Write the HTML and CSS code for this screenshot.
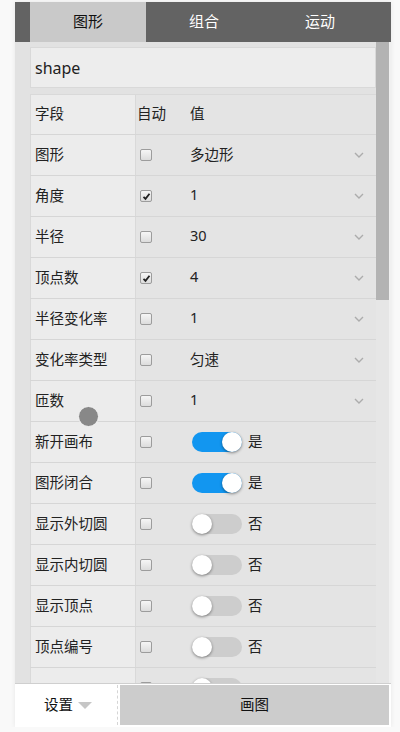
FILE: index.html
```html
<!DOCTYPE html>
<html>
<head>
<meta charset="utf-8">
<link rel="stylesheet" href="styles.css">
</head>
<body>
<div class="app">
  <div class="tabs">
    <div class="tab active">图形</div>
    <div class="tab">组合</div>
    <div class="tab">运动</div>
  </div>
  <div class="main">
    <div class="content">
      <div class="name-input">shape</div>
      <div class="table">
        <div class="row head"><div class="c1">字段</div><div class="c2"><span class="t">自动</span></div><div class="c3"><span class="val">值</span></div></div>
        <div class="row"><div class="c1">图形</div><div class="c2"><span class="cb"></span></div><div class="c3"><span class="val">多边形</span><svg class="chev" width="10" height="6" viewBox="0 0 10 6"><path d="M1 1l4 4 4-4" fill="none" stroke="#acacac" stroke-width="1.4"/></svg></div></div>
        <div class="row"><div class="c1">角度</div><div class="c2"><span class="cb on"><svg width="9" height="9" viewBox="0 0 9 9"><path d="M1.5 4.8l2 2 4-5" fill="none" stroke="#222" stroke-width="1.8"/></svg></span></div><div class="c3"><span class="val">1</span><svg class="chev" width="10" height="6" viewBox="0 0 10 6"><path d="M1 1l4 4 4-4" fill="none" stroke="#acacac" stroke-width="1.4"/></svg></div></div>
        <div class="row"><div class="c1">半径</div><div class="c2"><span class="cb"></span></div><div class="c3"><span class="val">30</span><svg class="chev" width="10" height="6" viewBox="0 0 10 6"><path d="M1 1l4 4 4-4" fill="none" stroke="#acacac" stroke-width="1.4"/></svg></div></div>
        <div class="row"><div class="c1">顶点数</div><div class="c2"><span class="cb on"><svg width="9" height="9" viewBox="0 0 9 9"><path d="M1.5 4.8l2 2 4-5" fill="none" stroke="#222" stroke-width="1.8"/></svg></span></div><div class="c3"><span class="val">4</span><svg class="chev" width="10" height="6" viewBox="0 0 10 6"><path d="M1 1l4 4 4-4" fill="none" stroke="#acacac" stroke-width="1.4"/></svg></div></div>
        <div class="row"><div class="c1">半径变化率</div><div class="c2"><span class="cb"></span></div><div class="c3"><span class="val">1</span><svg class="chev" width="10" height="6" viewBox="0 0 10 6"><path d="M1 1l4 4 4-4" fill="none" stroke="#acacac" stroke-width="1.4"/></svg></div></div>
        <div class="row"><div class="c1">变化率类型</div><div class="c2"><span class="cb"></span></div><div class="c3"><span class="val">匀速</span><svg class="chev" width="10" height="6" viewBox="0 0 10 6"><path d="M1 1l4 4 4-4" fill="none" stroke="#acacac" stroke-width="1.4"/></svg></div></div>
        <div class="row"><div class="c1">匝数</div><div class="c2"><span class="cb"></span></div><div class="c3"><span class="val">1</span><svg class="chev" width="10" height="6" viewBox="0 0 10 6"><path d="M1 1l4 4 4-4" fill="none" stroke="#acacac" stroke-width="1.4"/></svg></div></div>
        <div class="row"><div class="c1">新开画布</div><div class="c2"><span class="cb"></span></div><div class="c3"><span class="sw on"><span class="knob"></span></span><span class="swl">是</span></div></div>
        <div class="row"><div class="c1">图形闭合</div><div class="c2"><span class="cb"></span></div><div class="c3"><span class="sw on"><span class="knob"></span></span><span class="swl">是</span></div></div>
        <div class="row"><div class="c1">显示外切圆</div><div class="c2"><span class="cb"></span></div><div class="c3"><span class="sw"><span class="knob"></span></span><span class="swl">否</span></div></div>
        <div class="row"><div class="c1">显示内切圆</div><div class="c2"><span class="cb"></span></div><div class="c3"><span class="sw"><span class="knob"></span></span><span class="swl">否</span></div></div>
        <div class="row"><div class="c1">显示顶点</div><div class="c2"><span class="cb"></span></div><div class="c3"><span class="sw"><span class="knob"></span></span><span class="swl">否</span></div></div>
        <div class="row"><div class="c1">顶点编号</div><div class="c2"><span class="cb"></span></div><div class="c3"><span class="sw"><span class="knob"></span></span><span class="swl">否</span></div></div>
        <div class="row"><div class="c1"></div><div class="c2"><span class="cb"></span></div><div class="c3"><span class="sw"><span class="knob"></span></span></div></div>
      </div>
    </div>
    <div class="scrollbar"><div class="thumb"></div></div>
  </div>
  <div class="footer">
    <div class="settings">设置<span class="tri"></span></div>
    <div class="draw">画图</div>
  </div>
  <div class="dot"></div>
</div>
</body>
</html>
```

FILE: styles.css
```css
* { box-sizing: border-box; }
body {
  margin: 0;
  background: #f9f9f9;
  font-family: "Noto Sans", "Noto Sans CJK SC", sans-serif;
  color: #222;
}
.app {
  position: relative;
  margin: 2px 0 0 15px;
  width: 376px;
  height: 725px;
  display: flex;
  flex-direction: column;
  background: #e2e2e2;
  box-shadow: 0 0 5px rgba(0, 0, 0, 0.08);
}
.tabs {
  flex: none;
  height: 40px;
  background: #636363;
  display: flex;
  padding-left: 15px;
}
.tab {
  width: 116px;
  display: flex;
  align-items: center;
  justify-content: center;
  color: #fff;
  font-size: 15px;
  padding-bottom: 4px;
}
.tab.active {
  background: #c9c9c9;
  color: #111;
}
.main {
  flex: 1;
  min-height: 0;
  display: flex;
}
.content {
  flex: 1;
  overflow: hidden;
  padding: 5px 0 0 15px;
}
.scrollbar {
  flex: none;
  width: 15px;
  background: #e6e6e6;
  border-right: 2px solid #f0f0f0;
}
.thumb {
  height: 258px;
  background: #b3b3b3;
}
.name-input {
  height: 41px;
  border: 1px solid #d9d9d9;
  background: #ededed;
  font-size: 16px;
  padding-left: 4px;
  display: flex;
  align-items: center;
  color: #222;
}
.table {
  margin-top: 6px;
  border-top: 1px solid #d9d9d9;
}
.row {
  display: flex;
  height: 41px;
  border-bottom: 1px solid #d6d6d6;
  font-size: 14.5px;
}
.row.head { height: 40px; }
.c1 {
  width: 106px;
  flex: none;
  background: #ececec;
  border-left: 1px solid #d9d9d9;
  border-right: 1px solid #d9d9d9;
  padding: 0 0 4px 4px;
  display: flex;
  align-items: center;
}
.c2 {
  width: 49px;
  flex: none;
  background: #e4e4e4;
  padding-left: 4px;
  display: flex;
  align-items: center;
}
.head .c2 { padding-left: 1px; }
.t, .val, .swl { padding-bottom: 4px; }
.c3 {
  flex: 1;
  background: #e4e4e4;
  padding: 0 12px 0 5px;
  display: flex;
  align-items: center;
}
.val { flex: 1; }
.chev { flex: none; }
.cb {
  width: 12px;
  height: 12px;
  border: 1px solid #9c9c9c;
  border-radius: 2px;
  background: linear-gradient(#f6f6f6, #dcdcdc);
  display: flex;
  align-items: center;
  justify-content: center;
}
.sw {
  margin-left: 2px;
  width: 50px;
  height: 20px;
  border-radius: 10px;
  background: #cdcdcd;
  display: flex;
  align-items: center;
}
.sw.on {
  background: #1296f0;
  justify-content: flex-end;
}
.knob {
  width: 20px;
  height: 20px;
  border-radius: 50%;
  background: #fff;
  box-shadow: 0 1px 3px rgba(0, 0, 0, 0.45);
}
.swl { margin-left: 6px; }
.footer {
  flex: none;
  height: 44px;
  border-top: 1px solid #cfcfcf;
  background: #fff;
  display: flex;
  padding: 1px 2px 2px 0;
}
.settings {
  width: 103px;
  border-right: 1px dashed #d5d5d5;
  display: flex;
  align-items: center;
  justify-content: center;
  font-size: 14.5px;
  color: #111;
  padding: 0 0 3px 4px;
}
.tri {
  margin: 3px 0 0 5px;
  width: 0;
  height: 0;
  border-left: 7px solid transparent;
  border-right: 7px solid transparent;
  border-top: 7px solid #c6c6c6;
}
.draw {
  flex: 1;
  margin-left: 2px;
  background: #cccccc;
  display: flex;
  align-items: center;
  justify-content: center;
  font-size: 14.5px;
  color: #111;
  padding-bottom: 3px;
}
.dot {
  position: absolute;
  left: 63px;
  top: 404px;
  width: 21px;
  height: 21px;
  border-radius: 50%;
  background: #888;
  border: 1px solid #f4f4f4;
}
```
